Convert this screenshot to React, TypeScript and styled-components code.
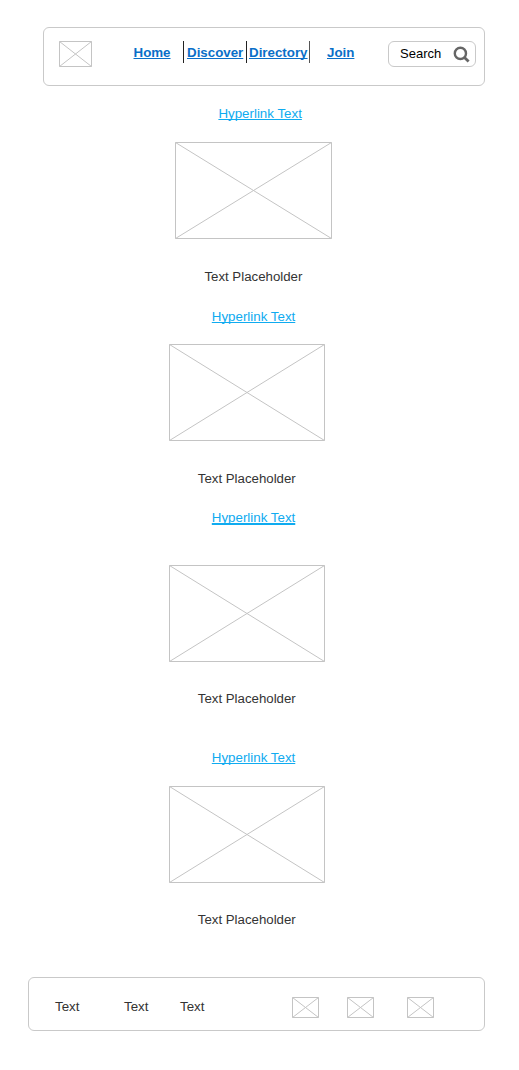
import React from "react";
import styled, { createGlobalStyle } from "styled-components";

const Global = createGlobalStyle`
  * { box-sizing: border-box; }
  body {
    margin: 0;
    background: #fff;
    color: #333;
    font: 13.333px/16px "Liberation Sans", Arial, sans-serif;
  }
`;

const Page = styled.div`
  width: 519px;
  height: 1070px;
  padding-top: 27px;
  display: flex;
  flex-direction: column;
  overflow: hidden;
`;

const Panel = styled.div`
  display: flex;
  align-items: flex-start;
  border: 1px solid #c9c9c9;
  border-radius: 6px;
`;

const Header = styled(Panel)`
  width: 442px;
  height: 59px;
  margin-left: 43px;
  padding: 13px 8px 0 15px;
`;

const Nav = styled.nav`
  display: flex;
  margin-left: 41px;
  width: 255px;
`;

const NavLink = styled.a<{ $width: number; $pad?: number; $divider?: string }>`
  width: ${(p) => p.$width}px;
  height: 22px;
  padding: 4px 0 0 ${(p) => p.$pad ?? 0}px;
  border-right: ${(p) => (p.$divider ? `1px solid ${p.$divider}` : "0")};
  color: #0a6fc8;
  font-weight: bold;
  white-space: nowrap;
  text-decoration: underline;
  text-decoration-thickness: 1px;
  text-underline-offset: 1px;
  text-decoration-skip-ink: none;
`;

const Search = styled.div`
  display: flex;
  align-items: center;
  justify-content: space-between;
  width: 88px;
  height: 26px;
  padding: 0 5px 0 11px;
  border: 1px solid #c9c9c9;
  border-radius: 6px;
  color: #000;
  font-size: 13px;
`;

const Card = styled.section<{ $top: number; $left: number }>`
  display: flex;
  flex-direction: column;
  align-items: flex-start;
  margin: ${(p) => p.$top}px 0 0 ${(p) => p.$left}px;
`;

const CardLink = styled.a<{ $line: number }>`
  margin-left: 43px;
  color: #0fabf0;
  text-decoration: underline;
  text-decoration-thickness: ${(p) => p.$line}px;
  text-underline-offset: 1px;
  text-decoration-skip-ink: none;
`;

const Picture = styled.div<{ $top: number; $bottom: number }>`
  display: flex;
  margin: ${(p) => p.$top}px 0 ${(p) => p.$bottom}px;
`;

const Caption = styled.div`
  margin-left: 29px;
  font-size: 13.25px;
`;

const Footer = styled(Panel)`
  width: 457px;
  height: 54px;
  margin: 49px 0 0 28px;
  padding: 19px 0 0 26px;
`;

const FooterText = styled.span<{ $width: number }>`
  width: ${(p) => p.$width}px;
  padding-top: 2px;
`;

const FooterIcon = styled.span<{ $width: number }>`
  display: flex;
  width: ${(p) => p.$width}px;
`;

function Placeholder({ w, h }: { w: number; h: number }) {
  return (
    <svg width={w} height={h} fill="none" stroke="#c4c4c4" strokeWidth="1">
      <path d={`M.5 .5H${w - 0.5}V${h - 0.5}H.5ZL${w - 0.5} ${h - 0.5}M${w - 0.5} .5L.5 ${h - 0.5}`} />
    </svg>
  );
}

const cards = [
  { top: 20, left: 175.4, width: 157, above: 20, below: 30, line: 1 },
  { top: 24, left: 168.8, width: 156, above: 19, below: 30, line: 1 },
  { top: 23, left: 168.8, width: 156, above: 39, below: 29, line: 2 },
  { top: 43, left: 168.8, width: 156, above: 20, below: 29, line: 1 },
];

export default function App() {
  return (
    <Page>
      <Global />
      <Header>
        <Placeholder w={33} h={26} />
        <Nav>
          <NavLink $width={51} $pad={0.5} $divider="#222">Home</NavLink>
          <NavLink $width={63} $pad={3} $divider="#222">Discover</NavLink>
          <NavLink $width={63} $pad={2} $divider="#555">Directory</NavLink>
          <NavLink $width={50} $pad={17}>Join</NavLink>
        </Nav>
        <Search>
          Search
          <svg width="17" height="17" viewBox="0 0 17 17" fill="none" stroke="#666" strokeWidth="2.4">
            <circle cx="7.4" cy="7.4" r="5.6" />
            <path d="M11.2 11.2l4.4 4.4" strokeWidth="2.8" />
          </svg>
        </Search>
      </Header>
      {cards.map((c, i) => (
        <Card key={i} $top={c.top} $left={c.left}>
          <CardLink $line={c.line}>Hyperlink Text</CardLink>
          <Picture $top={c.above} $bottom={c.below}>
            <Placeholder w={c.width} h={97} />
          </Picture>
          <Caption>Text Placeholder</Caption>
        </Card>
      ))}
      <Footer>
        <FooterText $width={69}>Text</FooterText>
        <FooterText $width={56}>Text</FooterText>
        <FooterText $width={112}>Text</FooterText>
        <FooterIcon $width={55}><Placeholder w={27} h={21} /></FooterIcon>
        <FooterIcon $width={60}><Placeholder w={27} h={21} /></FooterIcon>
        <FooterIcon $width={27}><Placeholder w={27} h={21} /></FooterIcon>
      </Footer>
    </Page>
  );
}
